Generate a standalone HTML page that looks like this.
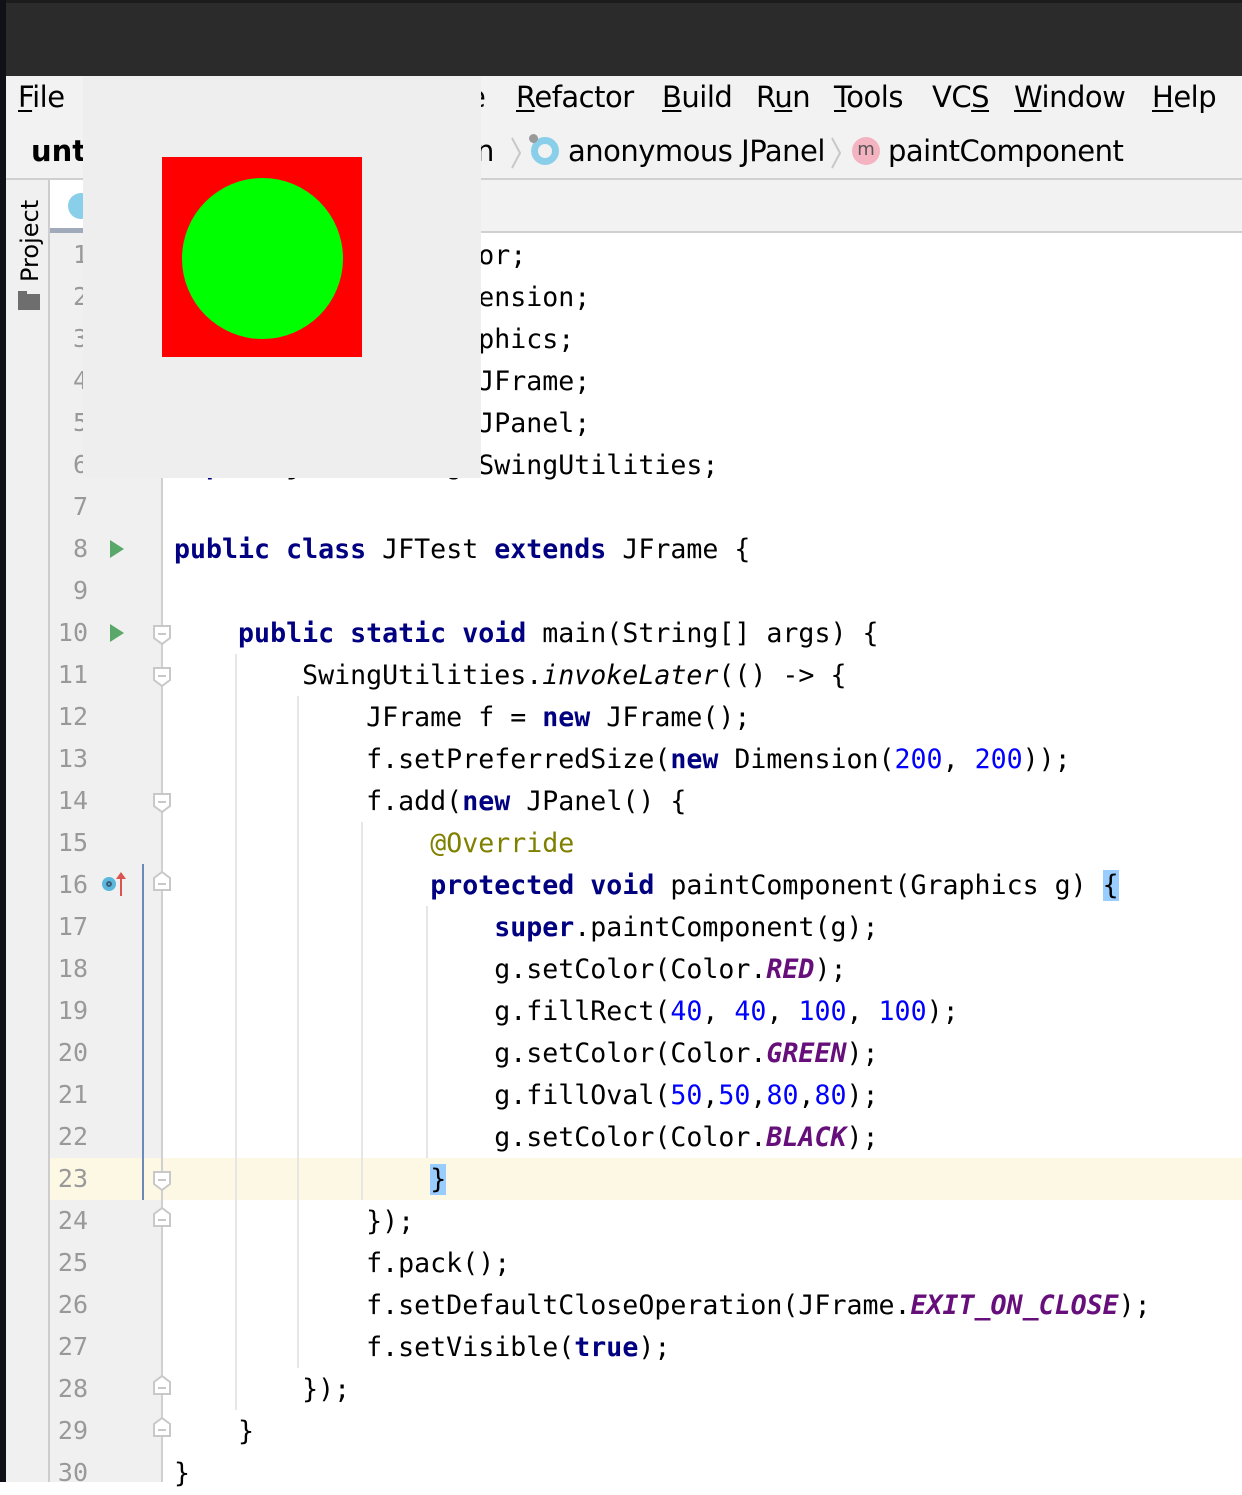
<!DOCTYPE html>
<html><head><meta charset="utf-8"><style>
*{margin:0;padding:0;box-sizing:border-box}
body{width:1242px;height:1482px;position:relative;overflow:hidden;background:#fff;font-family:"DejaVu Sans","Liberation Sans",sans-serif}
.a{position:absolute}
.m{position:absolute;top:80px;font-size:29px;color:#000;letter-spacing:-0.5px}
.m u{text-decoration:underline;text-underline-offset:3px}
.ln{position:absolute;left:50px;width:38px;text-align:right;font-family:"DejaVu Sans Mono",monospace;font-size:25px;color:#999;line-height:42px;height:42px}
.c{position:absolute;left:174px;top:1px;font-family:"DejaVu Sans Mono",monospace;font-size:26.6px;line-height:42px;height:42px;white-space:pre;color:#000}
.k{color:#000080;font-weight:bold}
.n{color:#0000ff}
.s{color:#660e7a;font-weight:bold;font-style:italic}
.an{color:#808000}
.g{position:absolute;width:2px;background:#e6e6e6}
.run{position:absolute;left:110px;width:0;height:0;border-top:9px solid transparent;border-bottom:9px solid transparent;border-left:14px solid #59a869}
</style></head><body>
<div class="a" style="left:0;top:0;width:1242px;height:76px;background:#2b2b2b"></div>
<div class="a" style="left:0;top:0;width:1242px;height:3px;background:#1c1c1c"></div>
<div class="a" style="left:0;top:0;width:6px;height:1482px;background:#0e1116"></div>
<div class="a" style="left:6px;top:76px;width:1236px;height:104px;background:#f2f2f2"></div>
<div class="a" style="left:6px;top:178px;width:1236px;height:2px;background:#d0d0d0"></div>
<div class="m" style="left:18px"><u>F</u>ile</div>
<div class="m" style="left:468px">e</div>
<div class="m" style="left:516px"><u>R</u>efactor</div>
<div class="m" style="left:662px"><u>B</u>uild</div>
<div class="m" style="left:756px">R<u>u</u>n</div>
<div class="m" style="left:834px"><u>T</u>ools</div>
<div class="m" style="left:932px">VC<u>S</u></div>
<div class="m" style="left:1014px"><u>W</u>indow</div>
<div class="m" style="left:1152px"><u>H</u>elp</div>
<div class="a" style="left:31px;top:134px;font-size:29px;font-weight:bold">untitled</div>
<div class="a" style="left:469px;top:134px;font-size:29px;letter-spacing:-1px">in</div>
<svg class="a" style="left:510px;top:136px" width="14" height="34"><path d="M2 2l8 15-8 15" fill="none" stroke="#c8c8c8" stroke-width="2"/></svg>
<div class="a" style="left:531px;top:137px;width:28px;height:28px;border-radius:50%;border:7px solid #8acfe9"></div>
<div class="a" style="left:529px;top:134px;width:9px;height:9px;border-radius:50%;background:#999"></div>
<div class="a" style="left:568px;top:134px;font-size:29px;letter-spacing:-0.5px">anonymous JPanel</div>
<svg class="a" style="left:830px;top:136px" width="14" height="34"><path d="M2 2l8 15-8 15" fill="none" stroke="#c8c8c8" stroke-width="2"/></svg>
<div class="a" style="left:852px;top:137px;width:28px;height:28px;border-radius:50%;background:#f4b3c0;font-size:18px;text-align:center;line-height:26px;color:#555">m</div>
<div class="a" style="left:888px;top:134px;font-size:29px;letter-spacing:-0.5px">paintComponent</div>
<div class="a" style="left:6px;top:180px;width:42px;height:1302px;background:#f0f0f0"></div>
<div class="a" style="left:48px;top:180px;width:2px;height:1302px;background:#cdcdcd"></div>
<div class="a" style="left:16px;top:282px;transform:rotate(-90deg);transform-origin:0 0;font-size:24px;white-space:nowrap">Project</div>
<div class="a" style="left:18px;top:294px;width:22px;height:16px;background:#6e6e6e"></div>
<div class="a" style="left:18px;top:291px;width:9px;height:4px;background:#6e6e6e"></div>
<div class="a" style="left:50px;top:180px;width:1192px;height:53px;background:#f2f2f2"></div>
<div class="a" style="left:50px;top:231px;width:1192px;height:2px;background:#d0d0d0"></div>
<div class="a" style="left:50px;top:180px;width:40px;height:48px;background:#fff"></div>
<div class="a" style="left:50px;top:228px;width:40px;height:5px;background:#a0aabb"></div>
<div class="a" style="left:68px;top:193px;width:26px;height:26px;border-radius:50%;background:#8acfe9"></div>
<div class="a" style="left:50px;top:233px;width:111px;height:1249px;background:#f0f0f0"></div>
<div class="a" style="left:50px;top:1158px;width:1192px;height:42px;background:#fdf8e4"></div>
<div class="a" style="left:161px;top:233px;width:2px;height:1249px;background:#d0d0d0"></div>
<div class="a" style="left:142px;top:864px;width:2px;height:336px;background:#6b8ab8"></div>
<div class="g" style="left:235px;top:654px;height:756px"></div>
<div class="g" style="left:297px;top:696px;height:672px"></div>
<div class="g" style="left:361px;top:822px;height:378px"></div>
<div class="g" style="left:426px;top:906px;height:252px"></div>
<div class="run" style="top:540px"></div>
<div class="run" style="top:624px"></div>
<div class="a" style="left:102px;top:877px;width:14px;height:14px;border-radius:50%;background:#5bb8dc;border:4px solid #5bb8dc;box-shadow:inset 0 0 0 2px #3a5a70"></div>
<div class="a" style="left:120px;top:876px;width:2px;height:20px;background:#d9534f"></div>
<div class="a" style="left:116px;top:872px;width:0;height:0;border-left:5px solid transparent;border-right:5px solid transparent;border-bottom:7px solid #d9534f"></div>
<svg class="a" style="left:150px;top:234px" width="24" height="1248">
<g fill="#fff" stroke="#c8c8c8" stroke-width="2">
<path d="M4 392h16v12l-8 6-8-6z"/><path d="M4 434h16v12l-8 6-8-6z"/><path d="M4 560h16v12l-8 6-8-6z"/>
<path d="M4 644l8-6 8 6v12h-16z"/><path d="M4 938h16v12l-8 6-8-6z"/><path d="M4 980l8-6 8 6v12h-16z"/>
<path d="M4 1148l8-6 8 6v12h-16z"/><path d="M4 1190l8-6 8 6v12h-16z"/>
</g>
<g stroke="#c8c8c8" stroke-width="2"><path d="M8 400h8M8 442h8M8 568h8M8 650h8M8 946h8M8 986h8M8 1154h8M8 1196h8"/></g>
</svg>
<div class="ln" style="top:234px">1</div><div class="ln" style="top:276px">2</div><div class="ln" style="top:318px">3</div><div class="ln" style="top:360px">4</div><div class="ln" style="top:402px">5</div><div class="ln" style="top:444px">6</div><div class="ln" style="top:486px">7</div><div class="ln" style="top:528px">8</div><div class="ln" style="top:570px">9</div><div class="ln" style="top:612px">10</div><div class="ln" style="top:654px">11</div><div class="ln" style="top:696px">12</div><div class="ln" style="top:738px">13</div><div class="ln" style="top:780px">14</div><div class="ln" style="top:822px">15</div><div class="ln" style="top:864px">16</div><div class="ln" style="top:906px">17</div><div class="ln" style="top:948px">18</div><div class="ln" style="top:990px">19</div><div class="ln" style="top:1032px">20</div><div class="ln" style="top:1074px">21</div><div class="ln" style="top:1116px">22</div><div class="ln" style="top:1158px">23</div><div class="ln" style="top:1200px">24</div><div class="ln" style="top:1242px">25</div><div class="ln" style="top:1284px">26</div><div class="ln" style="top:1326px">27</div><div class="ln" style="top:1368px">28</div><div class="ln" style="top:1410px">29</div><div class="ln" style="top:1452px">30</div>
<div class="c" style="top:235px"><span class="k">import</span> java.awt.Color;</div>
<div class="c" style="top:277px"><span class="k">import</span> java.awt.Dimension;</div>
<div class="c" style="top:319px"><span class="k">import</span> java.awt.Graphics;</div>
<div class="c" style="top:361px"><span class="k">import</span> javax.swing.JFrame;</div>
<div class="c" style="top:403px"><span class="k">import</span> javax.swing.JPanel;</div>
<div class="c" style="top:445px"><span class="k">import</span> javax.swing.SwingUtilities;</div>
<div class="c" style="top:529px"><span class="k">public class</span> JFTest <span class="k">extends</span> JFrame {</div>
<div class="c" style="top:613px">    <span class="k">public static void</span> main(String[] args) {</div>
<div class="c" style="top:655px">        SwingUtilities.<i>invokeLater</i>(() -&gt; {</div>
<div class="c" style="top:697px">            JFrame f = <span class="k">new</span> JFrame();</div>
<div class="c" style="top:739px">            f.setPreferredSize(<span class="k">new</span> Dimension(<span class="n">200</span>, <span class="n">200</span>));</div>
<div class="c" style="top:781px">            f.add(<span class="k">new</span> JPanel() {</div>
<div class="c" style="top:823px">                <span class="an">@Override</span></div>
<div class="c" style="top:865px">                <span class="k">protected void</span> paintComponent(Graphics g) <span style="background:#99ccff">{</span></div>
<div class="c" style="top:907px">                    <span class="k">super</span>.paintComponent(g);</div>
<div class="c" style="top:949px">                    g.setColor(Color.<span class="s">RED</span>);</div>
<div class="c" style="top:991px">                    g.fillRect(<span class="n">40</span>, <span class="n">40</span>, <span class="n">100</span>, <span class="n">100</span>);</div>
<div class="c" style="top:1033px">                    g.setColor(Color.<span class="s">GREEN</span>);</div>
<div class="c" style="top:1075px">                    g.fillOval(<span class="n">50</span>,<span class="n">50</span>,<span class="n">80</span>,<span class="n">80</span>);</div>
<div class="c" style="top:1117px">                    g.setColor(Color.<span class="s">BLACK</span>);</div>
<div class="c" style="top:1159px">                <span style="background:#99ccff">}</span></div>
<div class="c" style="top:1201px">            });</div>
<div class="c" style="top:1243px">            f.pack();</div>
<div class="c" style="top:1285px">            f.setDefaultCloseOperation(JFrame.<span class="s">EXIT_ON_CLOSE</span>);</div>
<div class="c" style="top:1327px">            f.setVisible(<span class="k">true</span>);</div>
<div class="c" style="top:1369px">        });</div>
<div class="c" style="top:1411px">    }</div>
<div class="c" style="top:1453px">}</div>
<div class="a" style="left:83px;top:76px;width:398px;height:402px;background:#eeeeee"></div>
<div class="a" style="left:162px;top:157px;width:200px;height:200px;background:#ff0000"></div>
<div class="a" style="left:182px;top:178px;width:161px;height:161px;border-radius:50%;background:#00ff00"></div>
</body></html>
